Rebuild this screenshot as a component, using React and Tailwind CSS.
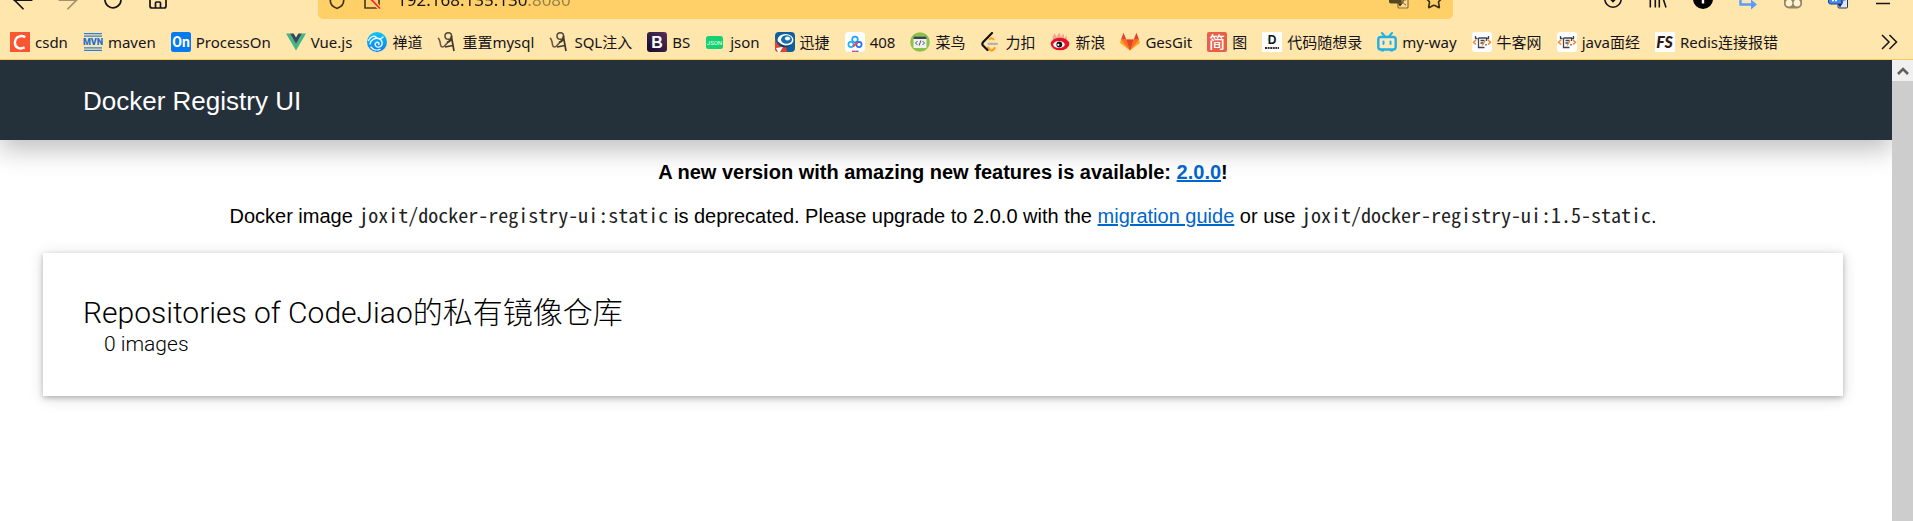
import React from 'react';
import { ArrowLeft, ArrowRight, Star, Shield } from 'lucide-react';

const Svg = ({ children }) => (
  <svg viewBox="0 0 20 20" className="w-5 h-5 shrink-0" aria-hidden="true">
    {children}
  </svg>
);

const CsdnIcon = () => (
  <Svg>
    <rect width="20" height="20" fill="#fc5531" />
    <path d="M15.3 5.2C11.5 2.8 5.2 4 4.9 10.6 4.8 16.2 10 17.6 14.6 15.4" fill="none" stroke="#fff" strokeWidth="2.4" />
  </Svg>
);

const MavenIcon = () => (
  <Svg>
    <path d="M1 1.7h18M1 4.2h18M1 15.8h18M1 18.300h18" stroke="#2f7fd6" strokeWidth="1.2" />
    <text x="10" y="13.300" textAnchor="middle" fontSize="9" fontWeight="900" fontFamily="Roboto, sans-serif" fill="#1f6fd0">MVN</text>
  </Svg>
);

const ProcessOnIcon = () => (
  <Svg>
    <rect width="20" height="20" rx="2.5" fill="#067bef" />
    <text x="10" y="14.8" textAnchor="middle" fontSize="14" fontWeight="700" fontFamily="Roboto, sans-serif" fill="#fff">On</text>
  </Svg>
);

const VueIcon = () => (
  <Svg>
    <path d="M0 1.5h4L10 12l6-10.500h4L10 18.500z" fill="#41b883" />
    <path d="M4 1.500h3.700L10 5.500l2.300-4H16L10 12z" fill="#34495e" />
  </Svg>
);

const ZentaoIcon = () => (
  <Svg>
    <defs>
      <linearGradient id="zentao" x1="0" y1="0" x2="0" y2="1">
        <stop offset="0" stopColor="#10c5f5" />
        <stop offset="1" stopColor="#0a7cf0" />
      </linearGradient>
    </defs>
    <circle cx="10" cy="10" r="10" fill="url(#zentao)" />
    <path d="M1.500 8.500C4 3.500 7.500 3.600 9.500 5.500c2 1.800 4.500 1.500 6.500-.5M3 12c.5-4 5-6.500 8.500-5.500 4.500 1.200 4.800 7 1.200 8.300-3.500 1.300-5.800-2-3.800-4 1.800-1.500 4 .3 2.800 1.700M4 15c2 3 6 3.500 9 2.300" fill="none" stroke="#e6f7ff" strokeWidth="1.400" strokeLinecap="round" />
  </Svg>
);

const InkIcon = () => (
  <Svg>
    <path d="M1 6c1.500 1 2 3 2.500 6.500.5 3.500 3 3 5 .5s3.500-4.300 5-4.800" fill="none" stroke="#6a5c48" strokeWidth="1.600" />
    <circle cx="11.300" cy="4" r="3.300" fill="none" stroke="#54493b" strokeWidth="1.500" />
    <path d="M14.500 4c.2 3-1.500 5.500-4.500 6.500M14.500 5l2.500 14" fill="none" stroke="#3f382f" strokeWidth="1.700" />
    <path d="M8 15l8-1.500" stroke="#3f382f" strokeWidth="1.500" />
  </Svg>
);

const BootstrapIcon = () => (
  <Svg>
    <defs>
      <linearGradient id="bs" x1="0" y1="1" x2="1" y2="0">
        <stop offset="0" stopColor="#150a2c" />
        <stop offset="1" stopColor="#56305c" />
      </linearGradient>
    </defs>
    <rect width="20" height="20" rx="3" fill="url(#bs)" />
    <text x="10" y="15.500" textAnchor="middle" fontSize="16" fontWeight="700" fontFamily="Liberation Sans, sans-serif" fill="#fff">B</text>
  </Svg>
);

const JsonIcon = () => (
  <Svg>
    <rect x="1" y="4" width="17" height="13" rx="2.500" fill="#15d172" />
    <text x="9.500" y="12.500" textAnchor="middle" fontSize="6" fontFamily="Roboto, sans-serif" fill="#eafff3">JSON</text>
  </Svg>
);

const XunjieIcon = () => (
  <Svg>
    <rect width="20" height="20" rx="4" fill="#0f5f9c" />
    <path d="M0 6c1 7 6 10 11 9l1 5H4a4 4 0 01-4-4z" fill="#e8432a" />
    <path d="M1 16l7-1-3 5H3z" fill="#fff" />
    <ellipse cx="10.500" cy="8" rx="8" ry="6" fill="#fff" />
    <ellipse cx="11.500" cy="7.500" rx="5.500" ry="4.300" fill="#1670ad" />
    <ellipse cx="12.500" cy="6.500" rx="2.600" ry="1.900" fill="#fff" />
    <path d="M2 8c3 4.500 9 7.500 14 4l-1 2c-5 3-11 1-13-6z" fill="#123c66" />
  </Svg>
);

const BaiduPanIcon = () => (
  <Svg>
    <rect width="20" height="20" rx="3.500" fill="#fff" />
    <circle cx="10" cy="7.500" r="2.800" fill="none" stroke="#19a4f5" strokeWidth="1.700" />
    <circle cx="6" cy="12.500" r="2.600" fill="none" stroke="#22b2f8" strokeWidth="1.700" />
    <circle cx="14" cy="12.500" r="2.600" fill="none" stroke="#2a6df0" strokeWidth="1.700" />
    <path d="M8 14.500l4.500-4.200" stroke="#f0455a" strokeWidth="2" />
    <path d="M7 19.300h3.500" stroke="#ee3355" strokeWidth="1.300" />
    <path d="M10.500 19.300h3" stroke="#2a6df0" strokeWidth="1.300" />
  </Svg>
);

const RunoobIcon = () => (
  <Svg>
    <circle cx="10" cy="10" r="9.800" fill="#8bc34a" />
    <rect x="3.500" y="4.500" width="13" height="11.500" fill="#f0f0ec" />
    <rect x="3.500" y="4.500" width="13" height="2.500" fill="#37474f" />
    <path d="M7.500 9L5.500 11l2 2M12.500 9l2 2-2 2M10.800 8.500l-1.600 5" fill="none" stroke="#455a64" strokeWidth="1" />
  </Svg>
);

const LeetCodeIcon = () => (
  <Svg>
    <path d="M8 15.500l2 2.300c1.200 1 2.600.8 3.700-.5l1-1.300" fill="none" stroke="#ffa116" strokeWidth="2.200" strokeLinecap="round" />
    <path d="M9 7.500c2-1.700 3.500-1.500 5 .3" fill="none" stroke="#ffa116" strokeWidth="2" />
    <path d="M12 1L3 10.300c-.8 1-.8 2.200 0 3.200L7.500 18" fill="none" stroke="#151515" strokeWidth="2.200" strokeLinecap="round" />
    <path d="M8.500 11.800H17" stroke="#b3b3b3" strokeWidth="2.200" strokeLinecap="round" />
  </Svg>
);

const SinaIcon = () => (
  <Svg>
    <path d="M3 8C2 5 4 3 5 1c0 2 1 3 2 4 .5-2 2-3 2-4.500 1.500 1.500 1 3 2 4.500.5-1 2-2 2-3.500 1.500 1.500 1 3 1 4.500 1-.5 2-1.500 2.500-2.500.5 2 .5 3.500-.5 5z" fill="#f4a08c" />
    <ellipse cx="10" cy="12" rx="9.300" ry="6.300" fill="#e2122a" />
    <ellipse cx="9" cy="12.500" rx="5.700" ry="3.600" fill="#fff" />
    <circle cx="9.300" cy="12.500" r="2.900" fill="#1a1414" />
    <circle cx="8.300" cy="12.800" r="1.100" fill="#fff" />
  </Svg>
);

const GitlabIcon = () => (
  <Svg>
    <path d="M10 18.500L0 11l1-3.500h18L20 11z" fill="#fca326" />
    <path d="M10 18.500L1 7.500h5.300zM10 18.500L19 7.500h-5.300z" fill="#fc6d26" />
    <path d="M10 18.500L6.300 7.500h7.400zM1 7.500L3.500.8l2.800 6.700zM19 7.500L16.500.8l-2.800 6.700z" fill="#e24329" />
  </Svg>
);

const JianIcon = () => (
  <Svg>
    <rect width="20" height="20" rx="2" fill="#e8604a" />
    <text x="10" y="15.800" textAnchor="middle" fontSize="16" fontWeight="500" fontFamily="Noto Sans CJK SC, sans-serif" fill="#fff">简</text>
  </Svg>
);

const CarlIcon = () => (
  <Svg>
    <rect width="20" height="20" fill="#fff" />
    <text x="10" y="12" textAnchor="middle" fontSize="12" fontWeight="700" fontFamily="Liberation Sans, sans-serif" fill="#111">D</text>
    <path d="M6.500 6v3" stroke="#1fb5ad" strokeWidth="1.200" />
    <path d="M3 16h14" stroke="#333" strokeWidth="1.800" strokeDasharray="2 .6" />
  </Svg>
);

const BilibiliIcon = () => (
  <Svg>
    <path d="M5 1l3 3.500M15 1l-3 3.500" stroke="#20b0e3" strokeWidth="2" strokeLinecap="round" />
    <rect x="1.300" y="5" width="17.400" height="12.500" rx="2.500" fill="#ffe9b8" stroke="#20b0e3" strokeWidth="2.400" />
    <path d="M6.500 9.500v2.500M13.500 9.500v2.500" stroke="#20b0e3" strokeWidth="2" strokeLinecap="round" />
    <path d="M4 18.800h3M13 18.800h3" stroke="#20b0e3" strokeWidth="1.500" />
  </Svg>
);

const NowcoderIcon = () => (
  <Svg>
    <rect width="20" height="20" rx="3" fill="#fff" />
    <path d="M3.500 4v2.500h2M16.500 4v2.500h-2M6.500 6h8v3M6.500 6v9.500h6M14 12v1.500M8.500 8.500h4M8.500 11h2.500" fill="none" stroke="#3c4450" strokeWidth="1.300" />
    <path d="M4 8l-2.500 2.300L4 12.500M16 8l2.500 2.300L16 12.500M13 8.500l-2.800 5" fill="none" stroke="#ff7f22" strokeWidth="1.500" />
  </Svg>
);

const FsIcon = () => (
  <Svg>
    <rect width="20" height="20" fill="#fff" />
    <text x="9.500" y="15.800" textAnchor="middle" fontSize="16" fontWeight="900" fontStyle="italic" fontFamily="Lato, sans-serif" fill="#2e1a12">FS</text>
  </Svg>
);

const ReloadIcon = () => (
  <Svg>
    <path d="M16 4.500A8 8 0 1 0 18 10M16.500 1v4h-4" fill="none" stroke="#15141a" strokeWidth="1.700" />
  </Svg>
);

const HomeIcon = () => (
  <Svg>
    <path d="M2 9l8-7 8 7v7a2 2 0 01-2 2H4a2 2 0 01-2-2zM7.500 18v-5a1 1 0 011-1h3a1 1 0 011 1v5" fill="none" stroke="#15141a" strokeWidth="1.700" strokeLinejoin="round" />
  </Svg>
);

const InsecurePageIcon = () => (
  <Svg>
    <path d="M3 2h10l4 4v12H3z" fill="none" stroke="#4b4020" strokeWidth="1.700" strokeLinejoin="round" />
    <path d="M2 2l16 16.500" stroke="#ffd067" strokeWidth="4" />
    <path d="M2 2l16 16.500" stroke="#f3214c" strokeWidth="1.700" />
  </Svg>
);

const PageTranslateIcon = () => (
  <Svg>
    <rect x="9" y="4" width="10" height="14" rx="1" fill="#ffd98a" stroke="#85703a" strokeWidth="1.200" />
    <path d="M12 10h5M14.500 9c0 3-1 5-3 6M13 11c1 2 2 3 4 4" fill="none" stroke="#6d5b2b" strokeWidth="1" />
    <path d="M0 0h11l2 13.500H2a2 2 0 01-2-2z" fill="#54461f" />
    <path d="M9 13.500h4l-2 3z" fill="#2f2710" />
  </Svg>
);

const HistoryIcon = () => (
  <Svg>
    <circle cx="10" cy="9" r="8.200" fill="none" stroke="#15141a" strokeWidth="1.600" />
    <path d="M10 4v7M7 8.500l3 3 3-3" fill="none" stroke="#15141a" strokeWidth="1.600" />
  </Svg>
);

const LibraryIcon = () => (
  <Svg>
    <path d="M2.300 2v15.500M7.300 2v15.500M11.300 2v15.500M14 5l4 12.500" fill="none" stroke="#15141a" strokeWidth="1.600" />
  </Svg>
);

const BadgeIcon = () => (
  <Svg>
    <circle cx="10" cy="9" r="10" fill="#000" />
    <path d="M6 4h8M10 4v9.500" stroke="#fff" strokeWidth="2.400" />
  </Svg>
);

const RedirectIcon = () => (
  <Svg>
    <path d="M15 3H2.500v11.500H15" fill="none" stroke="#5a9bff" strokeWidth="2.400" />
    <path d="M13 9.500l6 5-6 5z" fill="#5a9bff" />
  </Svg>
);

const PandaIcon = () => (
  <Svg>
    <rect x="1" y="2" width="18" height="16.500" rx="5" fill="#8f8668" />
    <circle cx="6" cy="13" r="3.400" fill="#fff3d2" />
    <circle cx="14" cy="13" r="3.400" fill="#fff3d2" />
    <path d="M7 5h6v4H7z" fill="#fff3d2" />
  </Svg>
);

const TranslateIcon = () => (
  <Svg>
    <rect x="10" y="4.500" width="9.500" height="13.500" rx="1" fill="#dfe6f5" stroke="#23345e" strokeWidth="1" />
    <path d="M12.500 10h5M15 9c0 3-1 5-3 6" fill="none" stroke="#3c62b0" strokeWidth="1.100" />
    <path d="M.5 0h11l2.500 14H2.500a2 2 0 01-2-2z" fill="#4688f1" stroke="#1e3f88" strokeWidth="1" />
    <path d="M4 10.500h6" stroke="#fff" strokeWidth="1.500" strokeDasharray="2 1" />
    <path d="M10 14h4l-2 3.500z" fill="#16295c" />
  </Svg>
);

const MenuIcon = () => (
  <Svg>
    <path d="M3 3.500h14M3 8.500h14M3 13.500h14" stroke="#15141a" strokeWidth="1.600" />
  </Svg>
);

const bookmarks = [
  { label: 'csdn', icon: CsdnIcon },
  { label: 'maven', icon: MavenIcon },
  { label: 'ProcessOn', icon: ProcessOnIcon },
  { label: 'Vue.js', icon: VueIcon },
  { label: '禅道', icon: ZentaoIcon },
  { label: '重置mysql', icon: InkIcon },
  { label: 'SQL注入', icon: InkIcon },
  { label: 'BS', icon: BootstrapIcon },
  { label: 'json', icon: JsonIcon },
  { label: '迅捷', icon: XunjieIcon },
  { label: '408', icon: BaiduPanIcon },
  { label: '菜鸟', icon: RunoobIcon },
  { label: '力扣', icon: LeetCodeIcon },
  { label: '新浪', icon: SinaIcon },
  { label: 'GesGit', icon: GitlabIcon },
  { label: '图', icon: JianIcon },
  { label: '代码随想录', icon: CarlIcon },
  { label: 'my-way', icon: BilibiliIcon },
  { label: '牛客网', icon: NowcoderIcon },
  { label: 'java面经', icon: NowcoderIcon },
  { label: 'Redis连接报错', icon: FsIcon },
];

const extensions = [
  { label: 'History', icon: HistoryIcon },
  { label: 'Library', icon: LibraryIcon },
  { label: 'Account', icon: BadgeIcon },
  { label: 'Redirect', icon: RedirectIcon },
  { label: 'Proxy', icon: PandaIcon },
  { label: 'Translate', icon: TranslateIcon },
  { label: 'Menu', icon: MenuIcon },
];

const ToolbarButton = ({ label, children }) => (
  <button type="button" aria-label={label} className="w-[45px] h-[38px] shrink-0 flex items-center justify-center text-[#15141a]">
    {children}
  </button>
);

const Toolbar = () => (
  <div className="h-[19px] flex items-end overflow-hidden pr-2">
    <ToolbarButton label="Back"><ArrowLeft className="w-[30px] h-[30px]" strokeWidth={1.4} /></ToolbarButton>
    <ToolbarButton label="Forward"><ArrowRight className="w-[30px] h-[30px] opacity-40" strokeWidth={1.4} /></ToolbarButton>
    <ToolbarButton label="Reload"><ReloadIcon /></ToolbarButton>
    <ToolbarButton label="Home"><HomeIcon /></ToolbarButton>
    <div className="flex-1 min-w-0 h-[38px] ml-[138px] mr-[137px] px-[9px] flex items-center gap-[15px] rounded-[5px] bg-[#ffd067]">
      <Shield className="w-5 h-5 shrink-0 text-[#3b3219]" strokeWidth={2} />
      <InsecurePageIcon />
      <input
        type="text"
        aria-label="Address"
        defaultValue="192.168.135.130:8080"
        className="flex-1 min-w-0 text-[17px] leading-6 outline-none bg-[linear-gradient(to_right,#15141a_131px,#94804a_131px)] bg-clip-text text-transparent"
      />
      <PageTranslateIcon />
      <Star className="w-5 h-5 shrink-0 text-[#3b3219]" strokeWidth={2} />
    </div>
    {extensions.map((ext) => (
      <ToolbarButton key={ext.label} label={ext.label}><ext.icon /></ToolbarButton>
    ))}
  </div>
);

const BookmarkBar = () => (
  <nav className="flex items-center pt-[13px] pb-[7px] pl-[10px] pr-[14px] border-b border-[#ffc95c]">
    <div className="flex-1 min-w-0 flex gap-[15px] overflow-hidden">
      {bookmarks.map((item) => (
        <a key={item.label} href="#" className="flex items-center gap-[5px] shrink-0 text-[15px] leading-5 text-[#15141a] whitespace-nowrap">
          <item.icon />
          {item.label}
        </a>
      ))}
    </div>
    <button type="button" aria-label="More bookmarks" className="h-5 flex items-center">
      <svg viewBox="0 0 20 20" className="w-5 h-5" aria-hidden="true">
        <path d="M3 3l7 7-7 7M10.500 3l7 7-7 7" fill="none" stroke="#15141a" strokeWidth="1.500" />
      </svg>
    </button>
  </nav>
);

const ScrollBar = () => (
  <div className="w-[21px] shrink-0 flex flex-col bg-[#cdcdcd]">
    <button type="button" aria-label="Scroll up" className="h-[21px] flex items-center justify-center bg-[#f0f0f0]">
      <svg viewBox="0 0 12 8" className="w-3 h-2" aria-hidden="true">
        <path d="M1 7l5-5 5 5" fill="none" stroke="#606060" strokeWidth="2.600" />
      </svg>
    </button>
  </div>
);

const ImageName = ({ children }) => (
  <code className="leading-none text-[#222] font-['Noto_Sans_Mono_CJK_SC','Liberation_Mono',monospace]">{children}</code>
);

const App = () => {
  return (
    <div className="min-h-screen flex flex-col bg-white text-black">
      {/* Browser chrome */}
      <div className="bg-[#ffe6ac] font-['Noto_Sans','Noto_Sans_CJK_SC',sans-serif]">
        <Toolbar />
        <BookmarkBar />
      </div>

      <div className="flex-1 flex">
        <div className="flex-1 min-w-0 overflow-hidden font-['Liberation_Sans',sans-serif]">
          <header className="h-20 pt-[2px] pl-[83px] flex items-center bg-[#25313a] shadow-[0_10px_24px_rgba(0,0,0,0.25)]">
            <h1 className="text-[26px] leading-8 text-white">Docker Registry UI</h1>
          </header>

          <main className="pt-5 pr-[6px]">
            {/* Upgrade notice */}
            <div className="space-y-5 text-center text-[20px] leading-6">
              <p className="font-bold">
                A new version with amazing new features is available:{' '}
                <a href="#" className="text-[#0066cc] underline">2.0.0</a>!
              </p>
              <p>
                Docker image <ImageName>joxit/docker-registry-ui:static</ImageName> is deprecated. Please upgrade to 2.0.0 with
                the <a href="#" className="text-[#0066cc] underline">migration guide</a> or
                use <ImageName>joxit/docker-registry-ui:1.5-static</ImageName>.
              </p>
            </div>

            {/* Repository list */}
            <section className="mt-[25px] mx-[43px] p-10 bg-white font-['Roboto','Noto_Sans_CJK_SC',sans-serif] font-light shadow-[0_2px_5px_rgba(0,0,0,0.22),0_2px_14px_rgba(0,0,0,0.16)]">
              <h2 className="text-[30px] leading-[39px]">Repositories of CodeJiao的私有镜像仓库</h2>
              <p className="pl-[21px] text-[21px] leading-6">0 images</p>
            </section>
          </main>
        </div>
        <ScrollBar />
      </div>
    </div>
  );
};

export default App;
